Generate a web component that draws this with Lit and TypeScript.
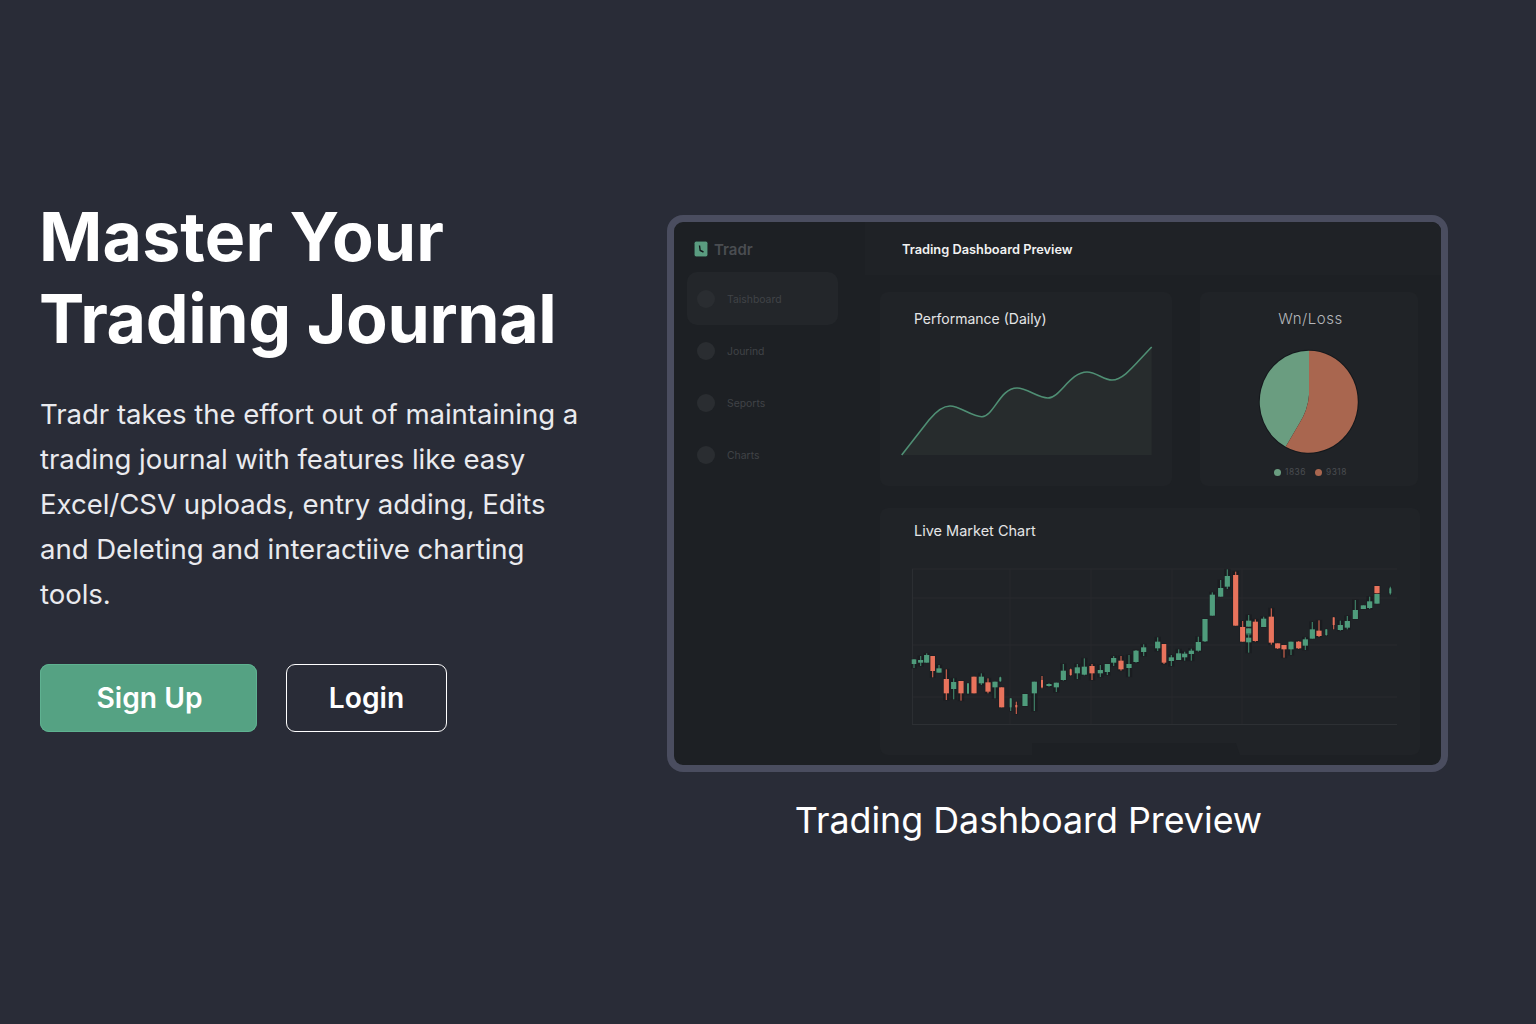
import { LitElement, html, css, svg } from "lit";
import { customElement } from "lit/decorators.js";

type C = [number, number, number, number, number, "g" | "r"];

// Candles: x, bodyTop, bodyBottom, wickTop, wickBottom, colour, as read from crops of the chart.
const LEFT: C[] = [
  [42,88,102,88,114,"g"],[62,90,98,78,108,"g"],[80,75,98,70,98,"g"],[98,78,123,78,142,"r"],
  [117,115,128,105,128,"g"],[139,147,190,118,210,"r"],[161,156,177,145,208,"g"],[183,153,190,153,212,"r"],
  [204,160,190,160,192,"g"],[222,140,190,140,190,"r"],[244,140,160,130,165,"g"],[264,157,185,145,190,"r"],
  [285,155,172,155,205,"g"],[301,142,154,140,155,"g"],[305,172,232,172,232,"r"],[332,205,232,205,243,"g"],
  [349,225,232,215,252,"r"],[375,192,228,192,228,"g"],[403,155,190,155,243,"g"],[426,150,172,138,175,"r"],
  [447,162,168,160,170,"g"],[469,158,172,158,186,"g"],[490,122,150,102,152,"g"],[512,118,135,116,137,"r"],
  [532,112,130,102,147,"g"],[553,110,134,85,136,"g"],[576,108,130,102,150,"r"],[601,120,130,105,141,"g"],
  [622,102,126,102,135,"g"],[641,84,98,78,108,"g"],[663,92,118,78,122,"r"],[687,102,114,75,140,"g"],
  [708,62,96,60,98,"g"],[731,52,66,43,78,"g"],
];
const RIGHT: C[] = [
  [23,245,265,232,273,"g"],[42,252,308,252,312,"r"],[64,292,303,285,318,"g"],[86,280,300,268,300,"g"],
  [104,281,292,275,302,"g"],[124,272,282,266,302,"g"],[145,246,272,230,275,"g"],[165,177,244,177,246,"g"],
  [187,104,167,97,167,"g"],[212,84,110,60,110,"g"],[232,48,80,28,87,"g"],[257,45,197,35,197,"r"],
  [278,201,245,183,245,"r"],[296,182,200,165,200,"g"],[296,205,226,205,226,"g"],[296,233,247,222,278,"g"],
  [316,185,243,178,245,"r"],[341,176,201,170,201,"g"],[364,170,248,145,254,"r"],[383,250,265,250,267,"r"],
  [402,255,268,255,293,"r"],[423,245,268,245,285,"g"],[446,245,265,243,267,"r"],[466,238,257,232,270,"g"],
  [487,208,236,186,236,"g"],[507,212,228,181,231,"r"],[529,208,225,208,227,"g"],[551,172,195,172,208,"r"],
  [571,195,210,182,212,"g"],[592,183,203,168,208,"g"],[616,150,177,120,177,"g"],[640,136,147,136,147,"g"],
  [659,124,144,110,147,"g"],[681,78,100,78,100,"r"],[681,102,131,102,131,"g"],[721,85,100,80,104,"g"],
];

const THIN = new Set([204, 301, 332, 349, 426, 512, 529, 551, 721]);

function candle(c: C, ox: number, oy: number) {
  const [zx, t, b, wt, wb, col] = c;
  const x = ox + zx / 3;
  const fill = col === "g" ? "#4f9c7c" : "#e8735c";
  const w = THIN.has(zx) ? 2 : zx === 42 || zx === 98 ? 4.6 : 5.2;
  return svg`
    <rect x=${x - w / 2 - 0.6} y=${oy + wt / 3 - 0.5} width=${w + 1.2} height=${(wb - wt) / 3 + 1} fill="#15181b" opacity="0.55"></rect>
    <rect x=${x - 0.6} y=${oy + wt / 3} width="1.2" height=${(wb - wt) / 3} fill=${col === "g" ? "#3f7f66" : "#c9604c"}></rect>
    <rect x=${x - w / 2} y=${oy + t / 3} width=${w} height=${(b - t) / 3} fill=${fill}></rect>`;
}

const H_LINES = [569, 598, 645, 697];
const V_LINES = [1010, 1091, 1172, 1242];

@customElement("app-root")
export class AppRoot extends LitElement {
  static styles = css`
    :host {
      display: block;
      min-height: 1024px;
      background: #292c37;
      font-family: Inter, "Liberation Sans", sans-serif;
      color: #fff;
    }
    .page { display: flex; height: 1024px; padding-left: 40px; box-sizing: border-box; }
    .hero { width: 627px; flex: none; padding-top: 195px; box-sizing: border-box; }
    h1 { margin: 0 0 0 -1px; font-size: 68px; line-height: 82px; font-weight: 700; }
    .l1 { letter-spacing: 0.15px; }
    .l2 { letter-spacing: -0.35px; }
    .lead { margin: 32.5px 0 0; font-size: 27.6px; line-height: 45px; width: 560px; color: #e9eaee; letter-spacing: -0.05px; }
    .actions { display: flex; gap: 29px; margin-top: 47.5px; }
    .btn {
      box-sizing: border-box; height: 68px; border-radius: 9px; display: flex;
      align-items: center; justify-content: center; font-size: 28.2px; font-weight: 600;
    }
    .signup { width: 217px; background: #55a283; box-shadow: inset 0 0 0 1px #5fb291; padding-left: 2px; }
    .login { width: 161px; border: 1.5px solid #fff; }

    .preview { padding-top: 215px; width: 781px; flex: none; }
    .frame {
      box-sizing: border-box; width: 781px; height: 557px; border: 7px solid #4a4d5f;
      border-radius: 16px; background: #1d2024; display: flex; overflow: hidden;
    }
    .caption { margin: 23px 58px 0 0; text-align: center; font-size: 35.8px; line-height: 50px; font-weight: 400; }

    .side { width: 191px; flex: none; padding: 17px 27px 0 13px; box-sizing: border-box; }
    .brand { display: flex; align-items: center; gap: 6px; margin: 0 0 0 7px; height: 20px; color: #4a4d51; font-size: 15px; font-weight: 600; }
    .brand svg { display: block; }
    .nav { margin-top: 13px; display: flex; flex-direction: column; }
    .item { display: flex; align-items: center; gap: 12px; height: 53px; padding-left: 10px; border-radius: 10px; font-size: 10.4px; color: #404347; }
    .item + .item { margin-top: -1px; }
    .item.active { background: #23262a; }
    .dot { width: 18px; height: 18px; border-radius: 50%; background: #2a2d31; flex: none; }
    .label { padding-top: 2px; }

    .main { flex: 1; min-width: 0; }
    .top { height: 53px; display: flex; align-items: center; padding: 1px 0 0 37px; box-sizing: border-box; background: #1f2226; font-size: 12.8px; font-weight: 600; color: #f2f2f2; }
    .content { padding: 17px 21px 0 15px; display: grid; grid-template-columns: 292px 218px; column-gap: 28px; row-gap: 22px; }
    .card { background: #202327; border-radius: 8px; position: relative; }
    .card svg { display: block; }
    .title { padding: 18px 34px 0; font-size: 14px; line-height: 18px; color: #e4e5e6; }
    .title.center { text-align: center; padding: 18px 0 0 3px; color: #b4b6b9; font-size: 15px; letter-spacing: 0.55px; font-weight: 300; }
    .legend { height: 28px; padding-left: 3px; display: flex; align-items: center; justify-content: center; gap: 9px; font-size: 8.4px; color: #4a4d51; letter-spacing: 0.5px; }
    .legend span { display: flex; align-items: center; gap: 4px; }
    .legend i { width: 7px; height: 7px; border-radius: 50%; display: block; }
    .live { grid-column: 1 / span 2; width: 540px; }
    .live .title { padding-top: 14px; font-size: 14.5px; }
    .notch { position: absolute; left: 152px; bottom: 0; width: 208px; height: 12px; background: #1d2024; clip-path: polygon(0 0, 98% 0, 100% 100%, 0 100%); }
  `;

  render() {
    return html`
      <div class="page">
        <section class="hero">
          <h1><span class="l1">Master Your</span><br /><span class="l2">Trading Journal</span></h1>
          <p class="lead">Tradr takes the effort out of maintaining a trading journal with features like easy Excel/CSV uploads, entry adding, Edits and Deleting and interactiive charting tools.</p>
          <div class="actions">
            <div class="btn signup">Sign Up</div>
            <div class="btn login">Login</div>
          </div>
        </section>
        <section class="preview">
          <div class="frame">
            <aside class="side">
              <div class="brand">
                <svg width="14" height="16" viewBox="0 0 14 16">
                  <rect x="0.25" y="0.25" width="13.5" height="15.5" rx="2" fill="#5a9c80" stroke="#14181c" stroke-width="0.5"></rect>
                  <path d="M5.5 4.5 L6.2 9.5 L9.5 11" fill="none" stroke="#14181c" stroke-width="1.4"></path>
                </svg>
                Tradr
              </div>
              <nav class="nav">
                <div class="item active"><i class="dot"></i><span class="label">Taishboard</span></div>
                <div class="item"><i class="dot"></i><span class="label">Jourind</span></div>
                <div class="item"><i class="dot"></i><span class="label">Seports</span></div>
                <div class="item"><i class="dot"></i><span class="label">Charts</span></div>
              </nav>
            </aside>
            <div class="main">
              <div class="top">Trading Dashboard Preview</div>
              <div class="content">
                <div class="card">
                  <div class="title">Performance (Daily)</div>
                  <svg width="292" height="158" viewBox="880 328 292 158">
                    <path d="M901.7 455 L929 420 C938 409 945 406 950 406 C960 406 972 417 982 416.7 C994 416 1000 388 1017 388 C1027 388 1038 398 1048 398 C1060 398 1070 372 1087 372 C1096 372 1104 380 1112 380 C1124 380 1135 364 1151.7 347 V455 Z" fill="#272c2d"></path>
                    <path d="M901.7 455 L929 420 C938 409 945 406 950 406 C960 406 972 417 982 416.7 C994 416 1000 388 1017 388 C1027 388 1038 398 1048 398 C1060 398 1070 372 1087 372 C1096 372 1104 380 1112 380 C1124 380 1135 364 1151.7 347" fill="none" stroke="#4f8f74" stroke-width="1.6"></path>
                  </svg>
                </div>
                <div class="card">
                  <div class="title center">Wn/Loss</div>
                  <svg width="218" height="130" viewBox="1200 328 218 130">
                    <ellipse cx="1308.8" cy="401.7" rx="50" ry="52" fill="#14181c"></ellipse>
                    <path d="M1309 350.7 A49 51 0 0 0 1285.7 446.7 L1299 424 Q1308 410 1309 395 Z" fill="#6a9d80"></path>
                    <path d="M1309 350.7 A49 51 0 1 1 1285.7 446.7 L1299 424 Q1308 410 1309 395 Z" fill="#a9664f"></path>
                  </svg>
                  <div class="legend">
                    <span><i style="background:#6a9d80"></i>1836</span>
                    <span><i style="background:#a9664f"></i>9318</span>
                  </div>
                </div>
                <div class="card live">
                  <div class="title">Live Market Chart</div>
                  <svg width="540" height="215" viewBox="880 540 540 215">
                    ${H_LINES.map((y) => svg`<line x1="912" x2="1397" y1=${y} y2=${y} stroke="#282b2f"></line>`)}
                    ${V_LINES.map((x) => svg`<line y1="569" y2="725" x1=${x} x2=${x} stroke="#26292d"></line>`)}
                    <line x1="912.5" x2="912.5" y1="569" y2="725" stroke="#2b2e32"></line>
                    <line x1="912" x2="1397" y1="724.5" y2="724.5" stroke="#2d3034"></line>
                    ${LEFT.map((c) => candle(c, 900, 630))}
                    ${RIGHT.map((c) => candle(c, 1150, 560))}
                  </svg>
                  <div class="notch"></div>
                </div>
              </div>
            </div>
          </div>
          <div class="caption">Trading Dashboard Preview</div>
        </section>
      </div>
    `;
  }
}
